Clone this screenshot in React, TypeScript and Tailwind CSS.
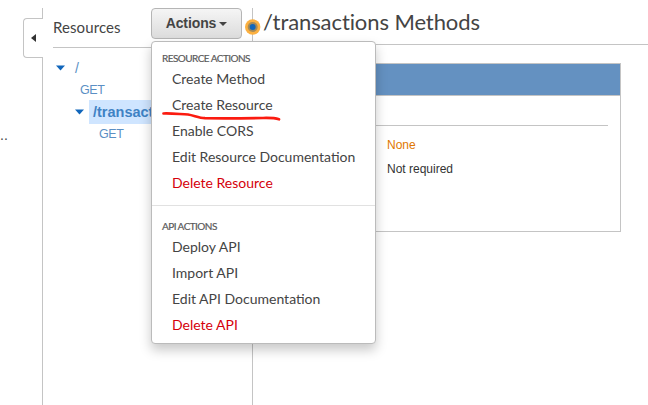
const itemClass = "h-[26px] whitespace-nowrap pl-[20px] text-[14px] leading-[26px]";

function MenuSection({ title, items, danger }: { title: string; items: string[]; danger: string }) {
  return (
    <div>
      <div className="h-[17px] pl-[10px] text-[10px] leading-[18px] tracking-[-0.55px] text-[#555] [-webkit-text-stroke:0.2px_#666]">{title}</div>
      <ul>
        {items.map((item) => (
          <li key={item} className={itemClass}>{item}</li>
        ))}
        <li className={itemClass + " text-[#d5000b]"}>{danger}</li>
      </ul>
    </div>
  );
}

function Triangle() {
  return (
    <svg width="9" height="6" viewBox="0 0 9 6" className="shrink-0">
      <path d="M0 .5h9L4.5 5.5z" fill="#1166bb" />
    </svg>
  );
}

function ActionsMenu() {
  return (
    <div className="absolute top-[41px] left-[151px] z-20 h-[303px] w-[225px] rounded-[4px] border border-[#bbb] bg-white pt-[7px] font-['Lato',sans-serif] text-[#444] shadow-[0_6px_12px_rgba(0,0,0,0.22)]">
      <MenuSection
        title="RESOURCE ACTIONS"
        items={["Create Method", "Create Resource", "Enable CORS", "Edit Resource Documentation"]}
        danger="Delete Resource"
      />
      <div className="mt-[9px] mb-[11px] h-px bg-[#e1e1e1]" />
      <MenuSection title="API ACTIONS" items={["Deploy API", "Import API", "Edit API Documentation"]} danger="Delete API" />
      <svg className="absolute top-[69px] left-[9px]" width="124" height="12" viewBox="0 0 124 12">
        <path
          d="M2.5 2.5C11 2.2 19 3.2 27 3.5C33 4.5 38 7 44 7.2C65 7.4 82 7.3 102 7C110 6.8 114 7 118 8.3"
          fill="none"
          stroke="#fb1b10"
          strokeWidth="2.7"
          strokeLinecap="round"
        />
      </svg>
    </div>
  );
}

export default function App() {
  return (
    <div className="relative flex h-[405px] w-[648px] overflow-hidden bg-white pt-[8px] font-['Liberation_Sans',Arial,sans-serif] text-[#444]">
      <aside className="flex w-[43px] shrink-0 flex-col">
        <div className="h-[10px] border-r border-[#c4c4c4]" />
        <div className="ml-[23px] flex h-[40px] items-center rounded-l-[4px] border border-r-0 border-[#c4c4c4] pl-[7px]">
          <svg width="5" height="8" viewBox="0 0 5 8">
            <path d="M5 0v8L0 4z" fill="#333" />
          </svg>
        </div>
        <div className="flex-1 border-r border-[#c4c4c4] pt-[68px] text-[14px] leading-[18px]">..</div>
      </aside>

      <section className="w-[210px] shrink-0 border-r border-[#c4c4c4] pl-[10px]">
        <header className="flex h-[40px] border-b border-[#c4c4c4]">
          <h2 className="w-[98px] pt-[9px] font-['Lato',sans-serif] text-[15px] leading-[20px] tracking-[0.1px]">Resources</h2>
          <button className="flex h-[31px] w-[91px] items-center justify-center gap-[3px] rounded-[4px] border border-[#b5b5b5] bg-linear-to-b from-[#f5f5f5] to-[#dcdcdc] text-[14px] font-bold tracking-[-0.1px] text-[#444]">
            Actions
            <svg width="8" height="4" viewBox="0 0 8 4">
              <path d="M0 0h8L4 4z" fill="#444" />
            </svg>
          </button>
        </header>
        <div className="pt-[9px] text-[14px] text-[#5b8fc4]">
          <div className="flex h-[22px] items-center gap-[10px] pl-[3px]"><Triangle /><span>/</span></div>
          <div className="h-[21px] pl-[27px] text-[12.5px] leading-[22px] tracking-[-0.4px]">GET</div>
          <div className="flex h-[24px] items-center pl-[22px]">
            <Triangle />
            <span className="ml-[5px] h-[24px] flex-1 overflow-hidden bg-[#cfe5ff] pl-[4px] text-[14.5px] leading-[24px] font-bold text-[#3f82c4]">/transactions</span>
          </div>
          <div className="h-[20px] pl-[46px] text-[12.5px] leading-[21px] tracking-[-0.4px]">GET</div>
        </div>
      </section>

      <main className="min-w-0 flex-1">
        <h1 className="h-[37px] border-b border-[#c4c4c4] pl-[10px] font-['Lato',sans-serif] text-[22px] leading-[27px] tracking-[-0.09px] whitespace-nowrap">/transactions Methods</h1>
        <div className="mt-[18px] mr-[27px] ml-[20px] h-[169px] border border-[#c4c4c4]">
          <div className="h-[32px] border-b border-[#c4c4c4] bg-[#6491c1]" />
          <div className="mr-[12px] ml-[12px] h-[30px] border-b border-[#c4c4c4]" />
          <dl className="pt-[7px] pl-[113px] text-[12px] leading-[24px]">
            <dd className="text-[#e07700]">None</dd>
            <dd className="text-[#333]">Not required</dd>
          </dl>
        </div>
      </main>

      <ActionsMenu />
      <svg className="absolute top-[19px] left-[245px] z-10" width="16" height="16" viewBox="0 0 16 16">
        <circle cx="7.7" cy="8" r="7.7" fill="#fbb040" />
        <circle cx="7.7" cy="8" r="5" fill="#a58a58" />
        <circle cx="7.7" cy="8" r="3" fill="#1166bb" />
      </svg>
    </div>
  );
}
